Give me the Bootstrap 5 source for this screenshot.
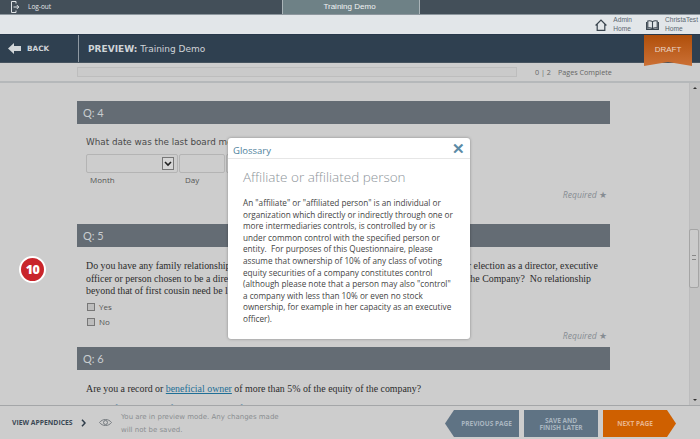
<!DOCTYPE html>
<html lang="en">
<head>
<meta charset="utf-8">
<title>Training Demo</title>
<link href="https://cdn.jsdelivr.net/npm/bootstrap@5.3.0/dist/css/bootstrap.min.css" rel="stylesheet">
<style>
html,body{height:439px;overflow:hidden;}
body{background:#cdcdcd;font-family:"Open Sans",sans-serif;color:#444;}
.page-shell{height:439px;width:700px;position:relative;}
.top-strip{height:15px;background:#434f59;border-bottom:1px solid #8d979e;color:#e4e8ea;font-size:6.5px;}
.logout-part{width:282px;padding-left:11px;gap:9px;}
.demo-tab{width:138px;background:#6e8186;border-left:1px solid #aab4b8;border-right:1px solid #aab4b8;font-size:8px;color:#f0f3f4;font-family:"Liberation Sans",sans-serif;padding-right:3px;}
.util-strip{height:19px;background:#e2e6e9;padding-right:2px;gap:14px;color:#5b6771;font-size:6.6px;line-height:8.5px;font-family:"Liberation Sans",sans-serif;}
.util-item{gap:6px;}
.navy-strip{height:29px;background:#2f4050;color:#cfd4d8;position:relative;border-top:1px solid #28384a;border-bottom:1px solid #46535f;}
.back-part{width:79px;border-right:1px solid #8f99a2;padding-left:8px;gap:6px;font:bold 7.3px "DejaVu Sans",sans-serif;}
.preview-title{padding-left:9px;font:9px "DejaVu Sans",sans-serif;}
.preview-title b{font-size:9px;}
.draft-flag{position:absolute;right:8px;top:0;width:48px;height:31px;background:linear-gradient(#b04f0a,#cb7035);color:#e9d5c7;font-size:8px;clip-path:polygon(0 0,100% 0,100% 100%,50% 87%,0 100%);z-index:2;font-family:"Liberation Sans",sans-serif;padding-bottom:2px;}
.progress-strip{height:20px;border-bottom:2px solid #b5b8ba;background:#cdcdcd;padding-left:77px;color:#666;font-size:7.2px;}
.track-box{width:440px;height:10px;border:1px solid #bdbdbd;background:#cacaca;}
.count-text{margin-left:18px;gap:7px;}
.middle-zone{height:322px;overflow:hidden;}
.scroll-body{width:689px;padding:18px 79px 0 77px;overflow:hidden;}
.q-head{height:23px;background:#646c74;color:#c9cdd0;font:11px "Lato",sans-serif;padding-left:6px;}
.q-tall{height:123px;}
.prompt-sans{font:8.8px "DejaVu Sans",sans-serif;color:#4a4a4a;margin:13px 0 0 9px;line-height:11px;}
.date-row{margin:6px 0 0 9px;gap:1px;}
.date-cell{height:19px;border:1px solid #b4b4b4;border-radius:2px;}
.cell-month{width:92px;}
.cell-day{width:46px;}
.cell-year{width:46px;}
.drop-arrow{width:12px;height:13px;border:1px solid #777;background:#d6d6d6;margin-right:3px;}
.date-labels{margin-left:13px;font-size:8px;color:#555;margin-top:1px;line-height:11px;}
.label-month{width:95px;}
.required-line{color:#868c92;font:italic 8.6px "Open Sans",sans-serif;text-align:right;padding-right:3px;line-height:10px;}
.required-line span{font-style:normal;font-size:9px;}
.req-a{margin-top:5px;}
.req-b{margin-top:1px;}
.prompt-serif{font:9.9px/12.6px "Liberation Serif",serif;color:#2c2c2c;margin:13px 0 0 9px;white-space:nowrap;}
.choice-row{margin-left:10px;gap:4px;font-size:8px;color:#555;height:15px;}
.choice-first{margin-top:2px;}
.fake-check{width:8px;height:8px;border:1px solid #777;background:#bdbdbd;}
.serif-link{color:#1f6f96;text-decoration:underline;}
.cut-line{font:10px/12px "Liberation Serif",serif;color:#1f6f96;margin:7px 0 0 9px;white-space:nowrap;}
.rail{width:11px;background:#c3c3c3;position:relative;border-left:1px solid #bcbcbd;}
.rail-up,.rail-down{position:absolute;left:3px;width:0;height:0;border-left:2px solid transparent;border-right:2px solid transparent;}
.rail-up{top:4px;border-bottom:2px solid #333;}
.rail-down{bottom:4px;border-top:2px solid #333;}
.rail-thumb{position:absolute;top:146px;left:-1px;width:10px;height:59px;background:#cbcbcb;border:1px solid #a5a5a5;border-radius:2px;}
.rail-thumb::after{content:"";position:absolute;left:2px;top:25px;width:4px;height:5px;border-top:1px solid #888;border-bottom:1px solid #888;}
.bottom-strip{height:34px;border-top:1px solid #a4a6a8;background:#cdcdcd;}
.appx-link{padding-left:12px;font:bold 6.8px "Open Sans",sans-serif;color:#3b4855;width:99px;gap:8px;}
.mode-text{font:7px/12.3px "DejaVu Sans",sans-serif;color:#8a8e91;margin:2px 0 0 9px;width:165px;}
.foot-btn{height:27px;width:74px;color:#a9b6c0;font:bold 6.5px/7px "Open Sans",sans-serif;background:#5f7384;text-align:center;}
.btn-prev{clip-path:polygon(9px 0,100% 0,100% 100%,9px 100%,0 50%);padding-left:9px;}
.btn-next{background:#cf6000;color:#eab48c;width:73px;clip-path:polygon(0 0,calc(100% - 9px) 0,100% 50%,calc(100% - 9px) 100%,0 100%);padding-right:9px;}
.foot-btns{position:absolute;left:445px;top:410px;gap:5px;}
.red-disc{position:absolute;left:19px;top:256px;width:27px;height:27px;border-radius:50%;background:#c9252b;border:2px solid #fff;color:#fff;font:800 12.5px "Open Sans",sans-serif;letter-spacing:-.5px;}
.gloss-box{position:absolute;left:228px;top:138px;width:242px;height:201px;background:#fff;border-radius:3px;box-shadow:0 0 3px rgba(0,0,0,.35);z-index:5;}
.gloss-top{height:21px;border-bottom:1px solid #e6e6e6;padding:7px 5px 0 5px;color:#4f7f9c;font-size:9.5px;}
.gloss-x{color:#5b8aa5;font:bold 15px/1 "Liberation Sans",sans-serif;margin-top:-7px;}
.gloss-title{font:300 13.5px/18px "Open Sans",sans-serif;color:#8d949a;margin:9px 0 0 15px;}
.gloss-text{font:8.2px/11.6px "Open Sans",sans-serif;color:#444;margin:11px 0 0 15px;white-space:pre;}
</style>
</head>
<body>
<div class="page-shell d-flex flex-column">
  <div class="top-strip d-flex">
    <div class="logout-part d-flex align-items-center">
      <svg width="8" height="12" viewBox="0 0 8 12" fill="none" stroke="#dfe3e6" stroke-width="1"><path d="M5 2.500V.5H.5v11H5V9.500"/><path d="M2.500 6H7.500M5.800 4l2 2-2 2"/></svg>
      <span>Log-out</span>
    </div>
    <div class="demo-tab d-flex align-items-center justify-content-center">Training Demo</div>
  </div>
  <div class="util-strip d-flex justify-content-end align-items-center">
    <div class="util-item d-flex align-items-center">
      <svg width="12" height="12" viewBox="0 0 12 12" fill="none" stroke="#39444e" stroke-width="1.200"><path d="M.6 6.500L6 1l5.400 5.500M2.200 5V11.400h7.600V5"/></svg>
      <div>Admin<br>Home</div>
    </div>
    <div class="util-item d-flex align-items-center">
      <svg width="13" height="10" viewBox="0 0 13 10" fill="none" stroke="#39444e" stroke-width="1.100"><path d="M6.500 1.600C5 .7 3.300.7 1.800 1v7c1.500-.3 3.200-.3 4.700.6 1.500-.9 3.200-.9 4.700-.6V1c-1.500-.3-3.200-.3-4.700.6zM6.500 1.600v7"/><path d="M.6 2V9.400H12.400V2"/></svg>
      <div>ChristaTest<br>Home</div>
    </div>
  </div>
  <div class="navy-strip d-flex">
    <div class="back-part d-flex align-items-center">
      <svg width="13" height="11" viewBox="0 0 13 11" fill="#d3d7da"><path d="M0 5.500L6 0v3h7v5H6v3z"/></svg>
      <span>BACK</span>
    </div>
    <div class="preview-title d-flex align-items-center"><span><b>PREVIEW:</b> Training Demo</span></div>
    <div class="draft-flag d-flex align-items-center justify-content-center">DRAFT</div>
  </div>
  <div class="progress-strip d-flex align-items-center">
    <div class="track-box"></div>
    <div class="count-text d-flex"><span>0 | 2</span><span>Pages Complete</span></div>
  </div>
  <div class="middle-zone d-flex">
    <div class="scroll-body">
      <div class="q-tall">
        <div class="q-head d-flex align-items-center">Q: 4</div>
        <div class="prompt-sans text-nowrap">What date was the last board meeting?</div>
        <div class="date-row d-flex">
          <div class="date-cell cell-month d-flex align-items-center justify-content-end">
            <div class="drop-arrow d-flex align-items-center justify-content-center"><svg width="8" height="6" viewBox="0 0 8 6" fill="none" stroke="#222" stroke-width="1.600"><path d="M1 1l3 3 3-3"/></svg></div>
          </div>
          <div class="date-cell cell-day"></div>
          <div class="date-cell cell-year"></div>
        </div>
        <div class="date-labels d-flex"><span class="label-month">Month</span><span>Day</span></div>
        <div class="required-line req-a">Required <span>★</span></div>
      </div>
      <div class="q-tall">
        <div class="q-head d-flex align-items-center">Q: 5</div>
        <div class="prompt-serif">Do you have any family relationship with any director, executive officer, or person nominated for election as a director, executive<br>officer or person chosen to be a director or executive officer of the Company or of any parent of the Company?&nbsp; No relationship<br>beyond that of first cousin need be listed.</div>
        <div class="choice-row choice-first d-flex align-items-center"><span class="fake-check"></span><span>Yes</span></div>
        <div class="choice-row d-flex align-items-center"><span class="fake-check"></span><span>No</span></div>
        <div class="required-line req-b">Required <span>★</span></div>
      </div>
      <div>
        <div class="q-head d-flex align-items-center">Q: 6</div>
        <div class="prompt-serif">Are you a record or <span class="serif-link">beneficial owner</span> of more than 5% of the equity of the company?</div>
        <div class="cut-line">A beneficial owner of more than 5% of a company's equity is a related party.</div>
      </div>
    </div>
    <div class="rail">
      <span class="rail-up"></span>
      <div class="rail-thumb"></div>
      <span class="rail-down"></span>
    </div>
  </div>
  <div class="bottom-strip d-flex align-items-center">
    <div class="appx-link d-flex align-items-center">
      <span class="text-nowrap">VIEW APPENDICES</span>
      <svg width="5" height="8" viewBox="0 0 5 8" fill="none" stroke="#2f3d4a" stroke-width="1.500"><path d="M1 .7l3 3.300-3 3.300"/></svg>
    </div>
    <svg width="13" height="9" viewBox="0 0 13 9" fill="none" stroke="#6d7378" stroke-width=".9"><path d="M.5 4.500C3.500.5 9.500.5 12.500 4.500 9.500 8.500 3.500 8.500.5 4.500z"/><circle cx="6.500" cy="4.500" r="2"/></svg>
    <div class="mode-text">You are in preview mode. Any changes made will not be saved.</div>
  </div>
  <div class="foot-btns d-flex">
    <div class="foot-btn btn-prev d-flex align-items-center justify-content-center">PREVIOUS PAGE</div>
    <div class="foot-btn d-flex align-items-center justify-content-center">SAVE AND<br>FINISH LATER</div>
    <div class="foot-btn btn-next d-flex align-items-center justify-content-center">NEXT PAGE</div>
  </div>
  <div class="red-disc d-flex align-items-center justify-content-center">10</div>
  <div class="gloss-box">
    <div class="gloss-top d-flex align-items-center justify-content-between"><span>Glossary</span><span class="gloss-x">✕</span></div>
    <div class="gloss-title">Affiliate or affiliated person</div>
    <div class="gloss-text">An "affiliate" or "affiliated person" is an individual or
organization which directly or indirectly through one or
more intermediaries controls, is controlled by or is
under common control with the specified person or
entity.  For purposes of this Questionnaire, please
assume that ownership of 10% of any class of voting
equity securities of a company constitutes control
(although please note that a person may also "control"
a company with less than 10% or even no stock
ownership, for example in her capacity as an executive
officer).</div>
  </div>
</div>
<script src="https://cdn.jsdelivr.net/npm/bootstrap@5.3.0/dist/js/bootstrap.bundle.min.js"></script>
</body>
</html>
